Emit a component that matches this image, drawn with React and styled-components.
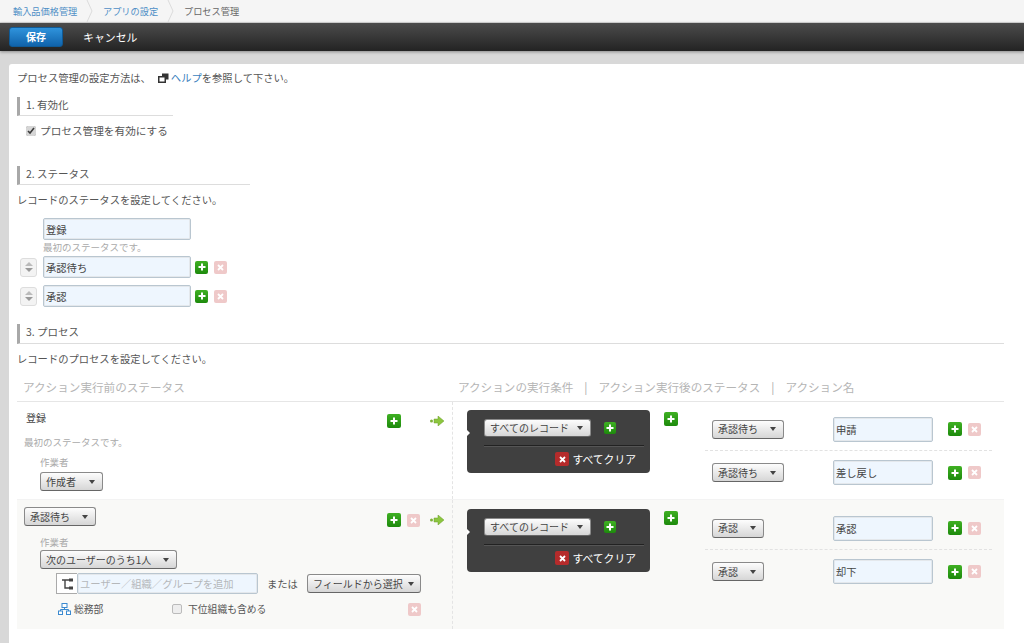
import React from "react";
import styled, { createGlobalStyle } from "styled-components";

const Global = createGlobalStyle`
  html, body { margin: 0; padding: 0; height: 643px; overflow: hidden; }
  body { background: #d8d8d8; font-family: "Noto Sans CJK JP", "Liberation Sans", sans-serif; color: #555; }
  * { box-sizing: border-box; }
`;

const Breadcrumb = styled.nav`
  height: 22px; background: #f5f5f5; display: flex; font-size: 9.2px; line-height: 22px;
`;
const Crumb = styled.a`
  position: relative; display: block; height: 22px; color: ${p => (p.$current ? "#666" : "#4f8fc6")};
  width: ${p => p.$w}px; padding-left: 13px;
  svg { position: absolute; right: -3px; top: 0; display: block; }
`;
const Chevron = () => (
  <svg width="7" height="22" viewBox="0 0 7 22"><path d="M1 0l5 11-5 11" fill="none" stroke="#dcdcdc" /></svg>
);
const Toolbar = styled.div`
  height: 28px; margin-top: 1px; background: linear-gradient(#4c4c4c, #232323); display: flex; align-items: center;
  padding: 0 0 1px 9px; box-shadow: 0 1px 3px #888;
`;
const SaveButton = styled.button`
  width: 54px; height: 20px; border: 1px solid #0f5a96; border-radius: 3px; color: #fff; font: bold 10px "Noto Sans CJK JP", sans-serif;
  background: linear-gradient(#2f93dc, #1063ab); padding: 0;
`;
const CancelButton = styled.span`
  margin-left: 20px; color: #fff; font-size: 10.9px;
`;
const Panel = styled.main`
  margin: 13px 0 0 9px; height: 591px; background: #fff; border-radius: 3px 0 0 0; padding: 7px 20px 0 8px; font-size: 10.3px; line-height: 14px;
`;
const Intro = styled.p`
  margin: 0; display: flex; align-items: center;
  color: #555;
`;
const HelpLink = styled.a` color: #3a7fbd; `;
const Heading = styled.h2`
  margin: ${p => p.$mt}px 0 0; width: ${p => p.$w}; height: ${p => p.$h || 19}px; font-size: 10.5px; font-weight: 400; line-height: 16px; color: #555;
  border-left: 3px solid #a8a8a8; border-bottom: 1px solid #ddd; padding-left: 6px;
`;
const CheckRow = styled.label`
  display: flex; align-items: center; margin: 8px 0 0 9px; height: 14px; color: #555; font-size: 10.65px;
`;
const Check = styled.input`
  width: 10px; height: 10px; margin: 0 ${p => p.$gap || 4}px 0 0; flex: none; accent-color: #d6d6d6;
  ${p => p.$empty && `
    appearance: none; background: #eee; border: 1px solid #bbb; border-radius: 2px;
  `}
`;
const Paragraph = styled.p`
  margin: ${p => p.$mt}px 0 0; color: #555;
`;
const StatusBlock = styled.div`
  margin: 11px 0 0 26px;
`;
const TextInput = styled.input`
  display: block; width: ${p => p.$w}px; height: ${p => p.$h}px; border: 1px solid #b9c6d0; box-shadow: 0 0 0 1px #e4e8ec inset;
  background: #eef6fe; font: 10.3px "Noto Sans CJK JP", sans-serif; color: #444; padding: 0 2px; border-radius: 2px; outline: none; flex: none;
  &::placeholder { color: #b5b8bb; }
`;
const Hint = styled.div`
  color: #aaa; font-size: ${p => p.$fs || 9.5}px; line-height: 14px; margin: ${p => p.$mt || 0}px 0 0 ${p => p.$ml || 0}px;
`;
const StatusRow = styled.div`
  display: flex; align-items: center; margin: ${p => p.$mt}px 0 0 3px;
`;
const Stepper = styled.div`
  width: 17px; height: 19px; border: 1px solid #ddd; border-radius: 3px; background: #f3f3f3; margin-right: 6px;
  display: flex; flex-direction: column; align-items: center; justify-content: center; gap: 2px; flex: none;
`;
const Tri = styled.i`
  width: 0; height: 0; border-left: 4px solid transparent; border-right: 4px solid transparent;
  ${p => (p.$up ? "border-bottom: 4px solid #bbb;" : "border-top: 4px solid #999;")}
`;
const IconBtn = styled.span`
  display: inline-flex; align-items: center; justify-content: center; flex: none; width: ${p => p.$s || 14}px; height: ${p => p.$s || 14}px; border-radius: 2px;
  margin-left: ${p => p.$ml || 0}px; margin-top: ${p => p.$mt || 0}px;
  visibility: ${p => (p.$hidden ? "hidden" : "visible")};
  background: ${p => p.$kind === "add" ? "linear-gradient(#3fb023, #1d8a0c)" : p.$kind === "clear" ? "#b52b2b" : "#efc9c9"};
  svg { display: block; }
`;
const Add = props => (
  <IconBtn $kind="add" {...props}>
    <svg width="8" height="8" viewBox="0 0 8 8"><path d="M4 .5v7M.5 4h7" stroke="#fff" strokeWidth="2" /></svg>
  </IconBtn>
);
const Del = ({ kind = "del", ...props }) => (
  <IconBtn $kind={kind} {...props}>
    <svg width="7" height="7" viewBox="0 0 7 7"><path d="M1 1l5 5M6 1L1 6" stroke="#fff" strokeWidth="1.8" /></svg>
  </IconBtn>
);
const ArrowWrap = styled.span` display: block; margin-left: 10px; height: 10px; flex: none; svg { display: block; } `;
const Arrow = () => (
  <ArrowWrap>
    <svg width="14" height="10" viewBox="0 0 14 10">
      <circle cx="1.5" cy="5" r="1.5" fill="#7fb23a" />
      <path d="M4 3h4V0l6 5-6 5V7H4z" fill="#8cc63f" stroke="#6d9e2b" strokeWidth=".5" />
    </svg>
  </ArrowWrap>
);

const Table = styled.section` margin: 14px 0 0; `;
const TableHead = styled.div`
  display: flex; align-items: center; height: 22px; padding: 0 0 8px 6px; border-bottom: 1px solid #e6e6e6; font-size: 11.6px; line-height: 14px; color: #b5b5b5;
`;
const HeadLeft = styled.span` width: 435px; flex: none; `;
const HeadSep = styled.span` margin: 0 11px; color: #aaa; `;
const Row = styled.div`
  display: grid; grid-template-columns: 436px 1fr; height: ${p => p.$h}px; background: ${p => (p.$alt ? "#f9f9f7" : "#fff")};
  border-bottom: ${p => (p.$alt ? "none" : "1px solid #f3f3f3")};
`;
const LeftCell = styled.div`
  border-right: 1px dashed #e4e4e4; padding: ${p => p.$pt}px 8px 0 7px; 
`;
const TopLine = styled.div` display: flex; justify-content: space-between; align-items: flex-start; `;
const StatusName = styled.span` margin-left: 2px; color: #444; font-size: 10px; `;
const TopActions = styled.div` display: flex; align-items: center; margin-top: ${p => p.$mt}px; `;
const FieldLabel = styled.div` margin: ${p => p.$mt}px 0 0 16px; color: #aaa; font-size: 9.5px; line-height: 14px; `;
const Dropdown = styled.div`
  display: flex; align-items: center; justify-content: space-between; width: ${p => p.$w}px; height: ${p => p.$h || 19}px; padding: 0 7px 0 5px;
  border: 1px solid #8a8a8a; border-bottom-color: #666; border-radius: 3px; background: linear-gradient(#fdfdfd, #d6d6d6); color: #444; font-size: ${p => p.$fs || 10}px; white-space: nowrap; flex: none;
  margin-left: ${p => p.$ml || 0}px; margin-top: ${p => p.$mt || 0}px;
  &::after { content: ""; border-left: 3px solid transparent; border-right: 3px solid transparent; border-top: 4px solid #444; margin-left: 5px; flex: none; }
`;
const PickerRow = styled.div` display: flex; align-items: center; margin: 4px 0 0 32px; `;
const TreeButton = styled.span`
  width: 21px; height: 21px; border: 1px solid #aaa; border-right: none; background: #fff; display: flex; align-items: center; justify-content: center; flex: none;
`;
const Or = styled.span` margin: 0 9px; color: #555; font-size: 10.3px; `;
const OrgRow = styled.div` display: flex; align-items: center; height: 14px; margin: 8px 8px 0 34px; color: #555; font-size: 9.8px; `;
const OrgName = styled.span` margin-left: 3px; width: 98px; flex: none; `;
const SubLabel = styled.span` width: 220px; flex: none; display: flex; align-items: center; `;
const RightCell = styled.div` display: flex; align-items: flex-start; padding: ${p => p.$pt}px 0 0 14px; `;
const ConditionBox = styled.div`
  position: relative; width: 183px; height: 63px; background: #404040; border-radius: 4px; padding: 9px 6px 0 17px; flex: none;
  &::before { content: ""; position: absolute; left: 0; top: 20px; border-left: 3px solid #fff; border-top: 3px solid transparent; border-bottom: 3px solid transparent; }
`;
const ConditionTop = styled.div` display: flex; align-items: center; height: 18px; `;
const Divider = styled.hr` border: none; border-top: 1px solid #222; border-bottom: 1px solid #555; margin: 8px 0 0 0; height: 2px; `;
const ClearLine = styled.div` display: flex; align-items: center; justify-content: flex-end; margin: 5px 8px 0 0; color: #fff; font-size: 10.8px; gap: 3px; `;
const Transitions = styled.div` margin-left: 27px; width: 287px; padding-top: ${p => p.$pt}px; `;
const Transition = styled.div`
  display: flex; align-items: center; padding-left: 7px; height: ${p => p.$first ? 34 : 34}px; padding-bottom: ${p => p.$first ? 9 : 0}px; padding-top: ${p => p.$first ? 0 : 9}px;
  border-bottom: ${p => (p.$first ? "1px dashed #e2e2e2" : "none")};
`;
const SelectSlot = styled.div` width: 121px; flex: none; `;

const HelpIconWrap = styled.svg` margin: 0 2px 0 7px; flex: none; `;
const HelpIcon = () => (
  <HelpIconWrap width="11" height="10" viewBox="0 0 11 10">
    <path d="M4 .5h6.5v6H8V3H4z" fill="#333" />
    <rect x=".75" y="3.75" width="6.5" height="5.5" fill="#fff" stroke="#333" strokeWidth="1.5" />
  </HelpIconWrap>
);
const TreeIcon = () => (
  <svg width="13" height="12" viewBox="0 0 13 12">
    <path d="M1 2h7M4 2v8h4" stroke="#444" strokeWidth="1.4" fill="none" />
    <rect x="8" y="0.5" width="4" height="3" fill="#444" />
    <rect x="8" y="8.5" width="4" height="3" fill="#444" />
  </svg>
);
const OrgSvg = styled.svg` flex: none; `;
const OrgIcon = () => (
  <OrgSvg width="13" height="12" viewBox="0 0 13 12">
    <rect x="4" y=".5" width="5" height="4" fill="#fff" stroke="#3b8ad0" />
    <path d="M6.5 4.5v2M2.5 8V6.5h8V8" stroke="#3b8ad0" fill="none" />
    <rect x=".5" y="8" width="4" height="3.5" fill="#fff" stroke="#3b8ad0" />
    <rect x="8.5" y="8" width="4" height="3.5" fill="#fff" stroke="#3b8ad0" />
  </OrgSvg>
);

const Condition = () => (
  <ConditionBox>
    <ConditionTop>
      <Dropdown $w={107} $h={18} $fs={10}>すべてのレコード</Dropdown>
      <Add $s={12} $ml={13} />
    </ConditionTop>
    <Divider />
    <ClearLine><Del kind="clear" />すべてクリア</ClearLine>
  </ConditionBox>
);

const TransitionRow = ({ first, w, status, action }) => (
  <Transition $first={first}>
    <SelectSlot><Dropdown $w={w}>{status}</Dropdown></SelectSlot>
    <TextInput $w={100} $h={25} value={action} readOnly />
    <Add $ml={15} />
    <Del $ml={6} $s={13} />
  </Transition>
);

export default function App() {
  return (
    <>
      <Global />
      <Breadcrumb>
        <Crumb $w={90}>輸入品価格管理<Chevron /></Crumb>
        <Crumb $w={81}>アプリの設定<Chevron /></Crumb>
        <Crumb $current $w={100}>プロセス管理</Crumb>
      </Breadcrumb>
      <Toolbar>
        <SaveButton>保存</SaveButton>
        <CancelButton>キャンセル</CancelButton>
      </Toolbar>
      <Panel>
        <Intro>プロセス管理の設定方法は、<HelpIcon /><HelpLink>ヘルプ</HelpLink>を参照して下さい。</Intro>
        <Heading $mt={12} $w="156px">1. 有効化</Heading>
        <CheckRow><Check type="checkbox" defaultChecked />プロセス管理を有効にする</CheckRow>

        <Heading $mt={28} $w="233px">2. ステータス</Heading>
        <Paragraph $mt={8}>レコードのステータスを設定してください。</Paragraph>
        <StatusBlock>
          <TextInput $w={148} $h={22} value="登録" readOnly />
          <Hint>最初のステータスです。</Hint>
        </StatusBlock>
        <StatusRow $mt={2}>
          <Stepper><Tri $up /><Tri /></Stepper>
          <TextInput $w={148} $h={22} value="承認待ち" readOnly />
          <Add $ml={4} $s={13} />
          <Del $ml={6} $s={13} />
        </StatusRow>
        <StatusRow $mt={7}>
          <Stepper><Tri $up /><Tri /></Stepper>
          <TextInput $w={148} $h={22} value="承認" readOnly />
          <Add $ml={4} $s={13} />
          <Del $ml={6} $s={13} />
        </StatusRow>

        <Heading $mt={17} $w="987px" $h={20}>3. プロセス</Heading>
        <Paragraph $mt={8}>レコードのプロセスを設定してください。</Paragraph>

        <Table>
          <TableHead>
            <HeadLeft>アクション実行前のステータス</HeadLeft>
            アクションの実行条件<HeadSep>|</HeadSep>アクション実行後のステータス<HeadSep>|</HeadSep>アクション名
          </TableHead>
          <Row $h={98}>
            <LeftCell $pt={9}>
              <TopLine>
                <StatusName>登録</StatusName>
                <TopActions $mt={3}>
                  <Add /><Del $ml={6} $s={13} $hidden /><Arrow />
                </TopActions>
              </TopLine>
              <Hint $mt={7}>最初のステータスです。</Hint>
              <FieldLabel $mt={6}>作業者</FieldLabel>
              <Dropdown $w={63} $ml={16} $mt={3}>作成者</Dropdown>
            </LeftCell>
            <RightCell $pt={8}>
              <Condition />
              <Add $ml={14} $mt={2} />
              <Transitions $pt={7}>
                <TransitionRow first w={72} status="承認待ち" action="申請" />
                <TransitionRow w={72} status="承認待ち" action="差し戻し" />
              </Transitions>
            </RightCell>
          </Row>
          <Row $alt $h={129}>
            <LeftCell $pt={7}>
              <TopLine>
                <Dropdown $w={72}>承認待ち</Dropdown>
                <TopActions $mt={6}>
                  <Add /><Del $ml={6} $s={13} /><Arrow />
                </TopActions>
              </TopLine>
              <FieldLabel $mt={8}>作業者</FieldLabel>
              <Dropdown $w={137} $ml={16} $mt={1}>次のユーザーのうち1人</Dropdown>
              <PickerRow>
                <TreeButton><TreeIcon /></TreeButton>
                <TextInput $w={181} $h={21} placeholder="ユーザー／組織／グループを追加" readOnly />
                <Or>または</Or>
                <Dropdown $w={114}>フィールドから選択</Dropdown>
              </PickerRow>
              <OrgRow>
                <OrgIcon />
                <OrgName>総務部</OrgName>
                <SubLabel><Check type="checkbox" $empty $gap={6} />下位組織も含める</SubLabel>
                <Del $s={13} $ml={16} />
              </OrgRow>
            </LeftCell>
            <RightCell $pt={9}>
              <Condition />
              <Add $ml={14} $mt={2} />
              <Transitions $pt={7}>
                <TransitionRow first w={52} status="承認" action="承認" />
                <TransitionRow w={52} status="承認" action="却下" />
              </Transitions>
            </RightCell>
          </Row>
        </Table>
      </Panel>
    </>
  );
}
